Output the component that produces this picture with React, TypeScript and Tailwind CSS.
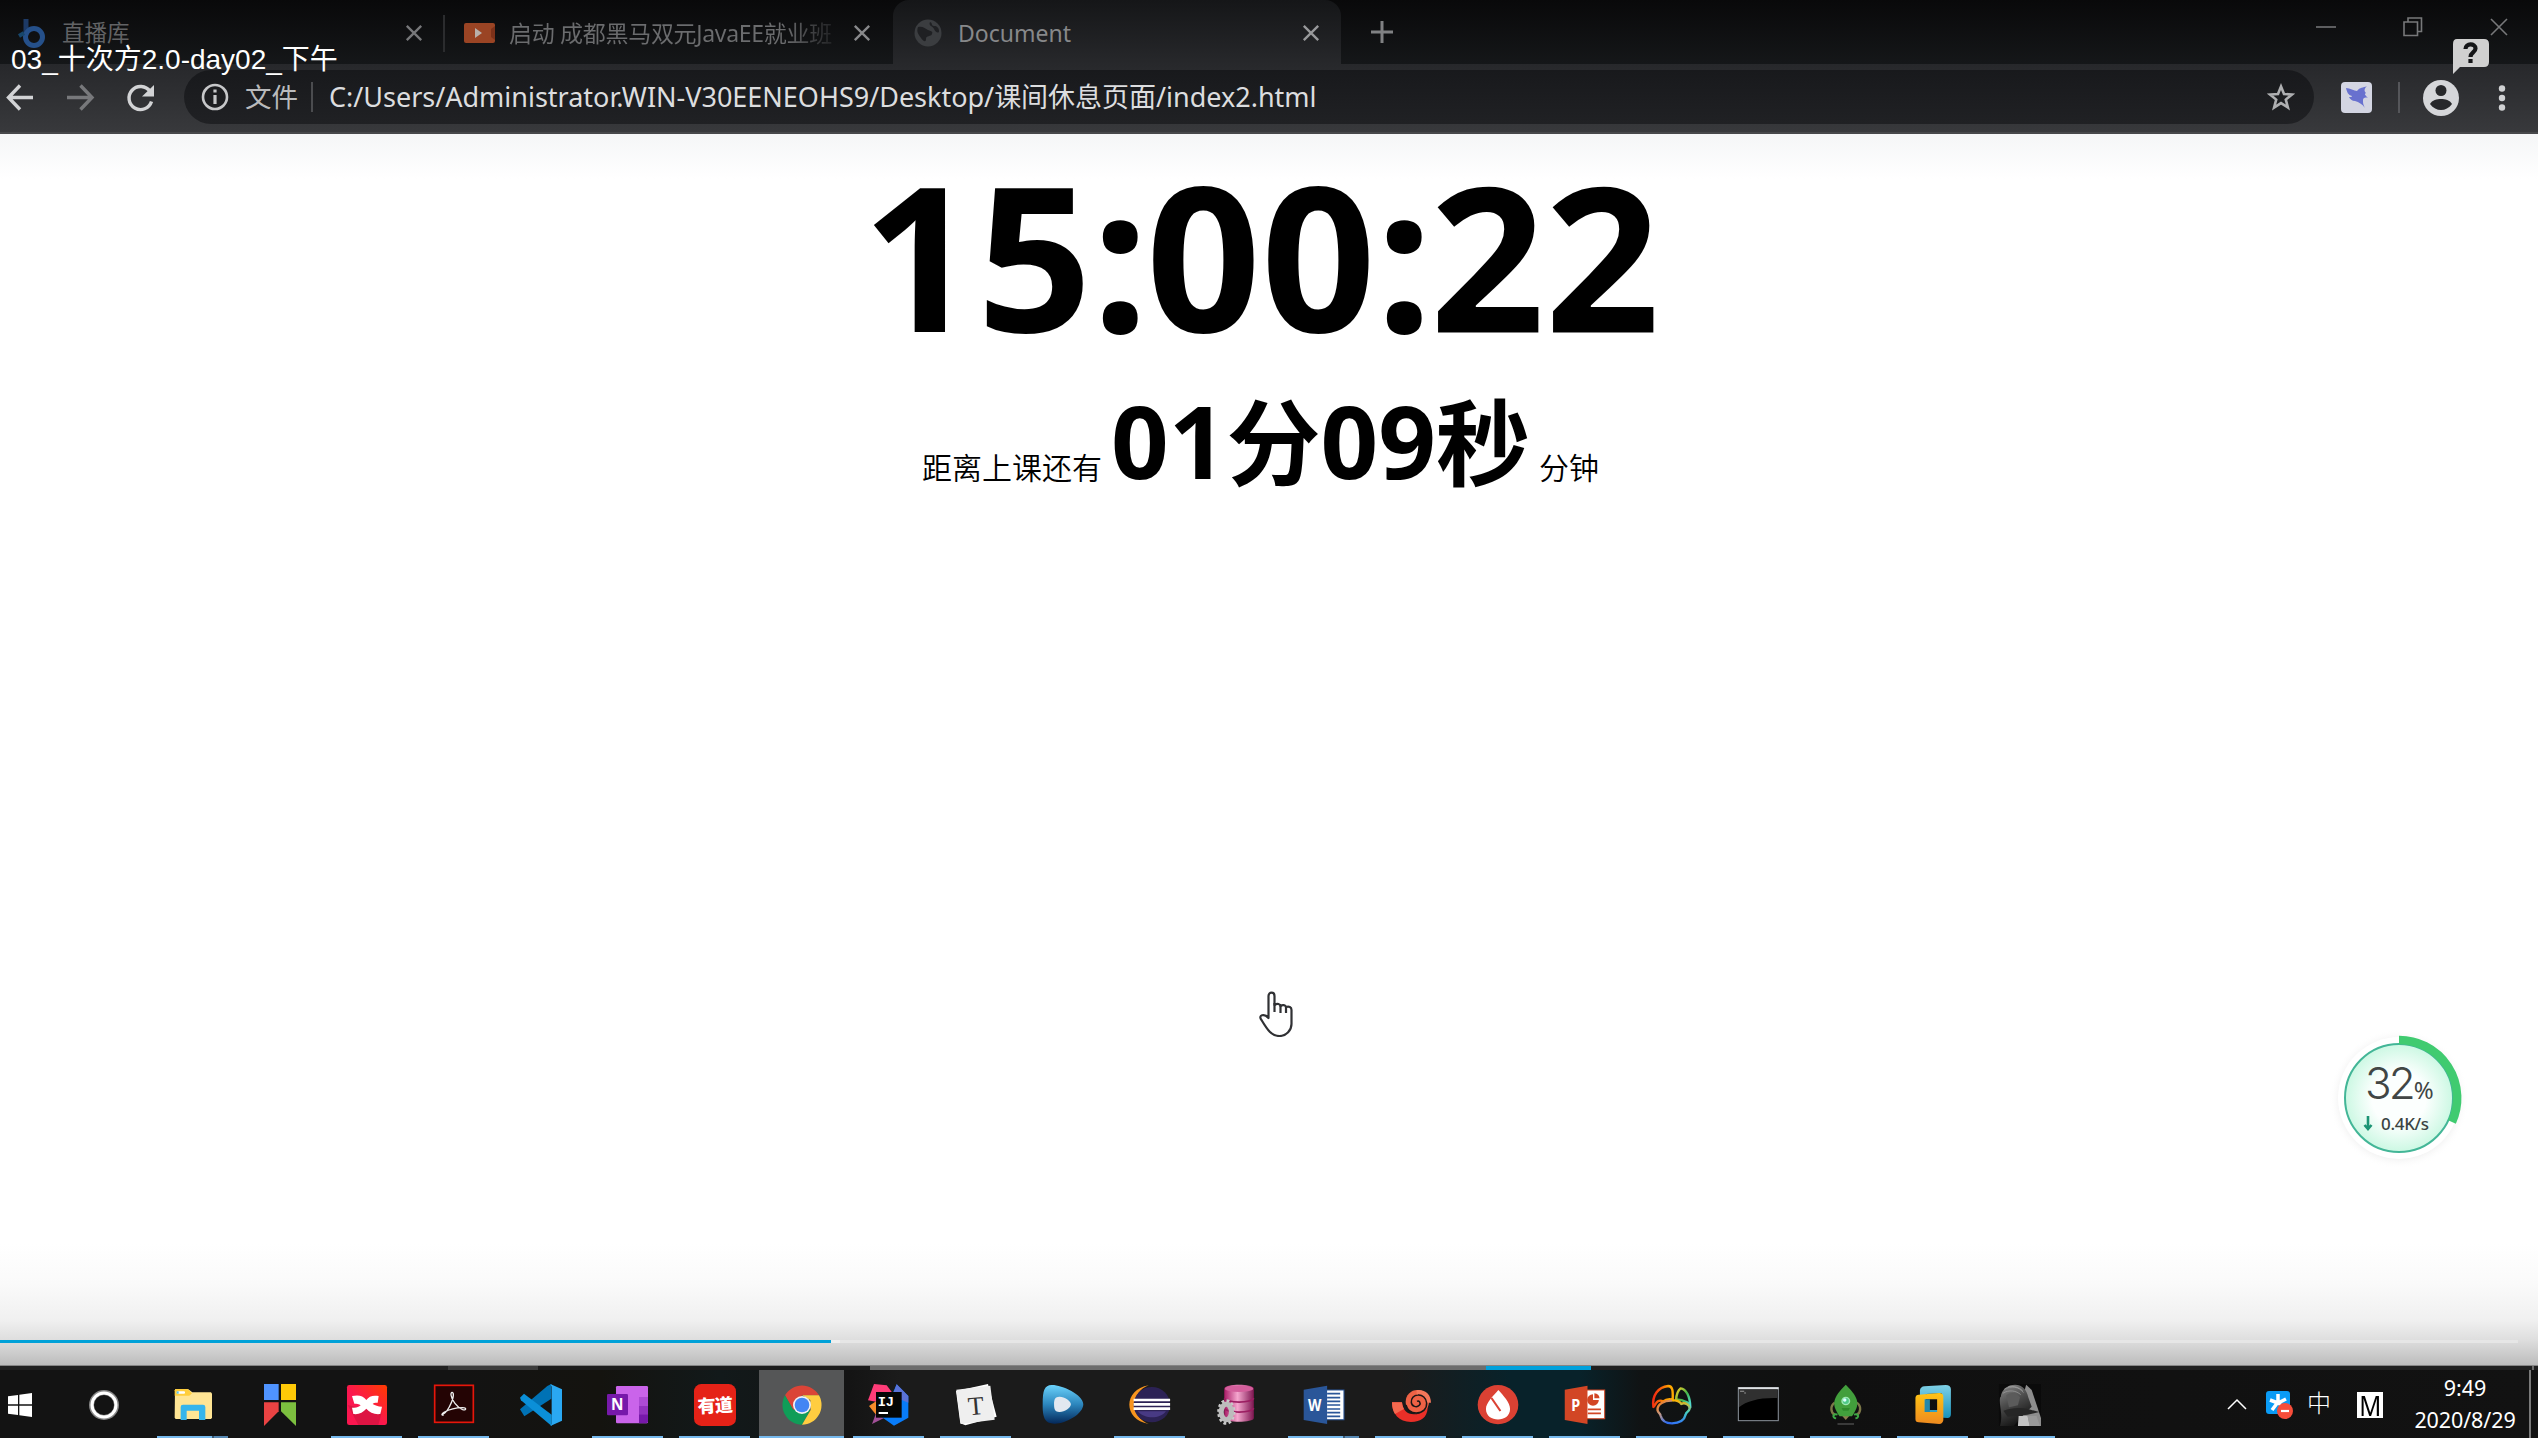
import React from "react";

const UI = "font-['Noto_Sans','Noto_Sans_CJK_SC',sans-serif]";

function Cross({ s, w, c, cls }: { s: number; w: number; c: string; cls?: string }) {
  return (
    <svg width={s} height={s} viewBox="0 0 20 20" className={`shrink-0 ${cls ?? ""}`} stroke={c} strokeWidth={w} fill="none">
      <path d="M2 2 18 18M18 2 2 18" />
    </svg>
  );
}

function TabStrip() {
  return (
    <div className="flex h-16 items-start bg-linear-to-b from-[#09090a] to-[#151719]">
      <div className="flex h-16 w-[443px] items-center pt-px pl-[17px]">
        <svg width="29" height="30" viewBox="0 0 29 30" className="mr-[16px]" fill="none">
          <path d="M9 1v16" stroke="#1d3a66" strokeWidth="5" />
          <circle cx="17" cy="19" r="8.5" stroke="#25508a" strokeWidth="5" />
          <path d="M2 18l5-3" stroke="#17466b" strokeWidth="4" />
        </svg>
        <span className="w-[336px] text-[22.500px] leading-8 text-[#626365]">直播库</span>
        <Cross s={18} w={2.6} c="#77787a" cls="ml-[7px]" />
      </div>
      <div className="mt-[15px] h-[37px] w-[2px] bg-[#2b2c2e]" />
      <div className="flex h-16 w-[448px] items-center pt-px pl-[19px]">
        <svg width="31" height="20" viewBox="0 0 31 20">
          <rect width="31" height="20" rx="2" fill="#9a4424" />
          <path d="M11 5v10l7-5z" fill="#b9b0aa" />
          <path d="M27 6l4-3v14l-4-3z" fill="#7d3119" />
        </svg>
        <div className="ml-[14px] w-[325px] overflow-hidden bg-linear-to-r from-[#6b6c6e] from-85% to-[#202123] bg-clip-text text-[23px] leading-8 tracking-[-0.3px] whitespace-nowrap text-transparent">启动 成都黑马双元JavaEE就业班</div>
        <Cross s={18} w={2.6} c="#88898b" cls="ml-[19px]" />
      </div>
      <div className="flex h-16 w-[448px] items-center rounded-t-[16px] bg-linear-to-b from-[#151618] to-[#27282b] pt-px pl-[21px]">
        <svg width="28" height="28" viewBox="0 0 28 28">
          <circle cx="14" cy="14" r="13.5" fill="#3b3d40" />
          <path d="M4 8c5-1 6 1 10 3s5 1 4 4-6 1-6 5-3 2-5-1-5-6-3-11zM16 3c3 1 1 4 4 4s5 2 5 5-4 1-5-2-6-3-4-7z" fill="#1f2023" />
        </svg>
        <span className="ml-[16px] w-[343px] text-[23px] leading-8 text-[#87888a]">Document</span>
        <Cross s={18} w={2.6} c="#98999b" cls="ml-px" />
      </div>
      <svg width="24" height="24" viewBox="0 0 24 24" className="mt-5 ml-[29px]" stroke="#808183" strokeWidth="3">
        <path d="M12 1v22M1 12h22" />
      </svg>
      <div className="ml-auto flex pt-[17px] pr-[29px]">
        <div className="mt-[9px] mr-[67px] h-[2px] w-[20px] bg-[#5d5e60]" />
        <svg width="20" height="20" viewBox="0 0 20 20" className="mr-[66px]" fill="none" stroke="#77787a" strokeWidth="1.6">
          <path d="M1 5h13.500v13.500H1zM5 5V1h13.500v13.500h-4" />
        </svg>
        <Cross s={20} w={1.6} c="#77787a" />
      </div>
    </div>
  );
}

function Toolbar() {
  return (
    <div className="flex h-[70px] items-start border-b-2 border-[#47484a] bg-linear-to-b from-[#27282b] to-[#38393c]">
      <svg width="160" height="40" viewBox="0 0 160 40" className="mt-[13px] shrink-0" fill="none" strokeWidth="3.4">
        <path d="M33 20.500H9M20 8.500 8.500 20.500 20 32.500" stroke="#d2d3d5" />
        <path d="M67 20.500H91M80.500 8.500 92 20.500 80.500 32.500" stroke="#77787b" />
        <path d="M150 14.500A11.500 11.500 0 1 0 151.500 24.500" stroke="#d2d3d5" />
        <path d="M154 8v11.500h-12z" fill="#d2d3d5" />
      </svg>
      <div className="mt-[6px] ml-[24px] flex h-[54px] w-[2130px] shrink-0 items-center rounded-full bg-linear-to-b from-[#18191c] to-[#202124] pl-[17px]">
        <svg width="28" height="28" viewBox="0 0 28 28" fill="none" stroke="#c6c7c9" strokeWidth="2.600">
          <circle cx="14" cy="14" r="12" />
          <path d="M14 12v9M14 6.500v3" strokeWidth="3.200" />
        </svg>
        <span className="ml-[16px] w-[66px] text-[26.500px] leading-8 text-[#b9babc]">文件</span>
        <div className="h-[30px] w-[2px] bg-[#4b4c4f]" />
        <span className="ml-[16px] text-[27px] leading-8 tracking-[-0.01px] whitespace-nowrap text-[#dcdddf]">C:/Users/Administrator.WIN-V30EENEOHS9/Desktop/课间休息页面/index2.html</span>
        <svg width="28" height="28" viewBox="0 0 28 28" className="mr-[19px] ml-auto" fill="none" stroke="#aeafb1" strokeWidth="2.600">
          <path d="M14 3.500l3 7.500 8 .5-6.200 5.100 2.100 7.900-6.900-4.400-6.900 4.400 2.100-7.900L3 11.500l8-.5z" />
        </svg>
      </div>
      <div className="mt-[18px] ml-[27px] flex h-[31px] items-center">
        <svg width="31" height="31" viewBox="0 0 31 31" className="mr-[26px]">
          <rect width="31" height="31" rx="4" fill="#d3d5e2" />
          <path d="M5 6c4 0 8 3 11 3 3-4 6-3 10-5-3 3-3 5-1 7-2 1-1 2 2 5-3-1-5 0-5 2 0 3 0 4 2 8-3-4-6-6-10-7-3 0-5-2-6-4 2 0 3 0 3-1-4-1-5-4-6-8z" fill="#6871cf" />
        </svg>
        <div className="mr-[23px] h-[31px] w-[2px] bg-[#55565a]" />
        <svg width="36" height="36" viewBox="0 0 36 36" className="mr-[39px]">
          <circle cx="18" cy="18" r="18" fill="#d5d6d9" />
          <circle cx="18" cy="10.500" r="5.500" fill="#27282b" />
          <path d="M7 24c2-4 7-5 11-5s9 1 11 5c-3 4-7 6-11 6s-8-2-11-6z" fill="#27282b" />
        </svg>
        <svg width="8" height="28" viewBox="0 0 8 28" fill="#d0d1d3">
          <circle cx="4" cy="4.500" r="3.200" />
          <circle cx="4" cy="14" r="3.200" />
          <circle cx="4" cy="23.500" r="3.200" />
        </svg>
      </div>
    </div>
  );
}

function Page() {
  return (
    <div className="flex h-[1231px] flex-col items-center bg-[linear-gradient(to_bottom,#f5f6f7_0px,#ffffff_45px,#ffffff_1110px,#fafafa_1150px,#f0f0f0_1186px,#dedede_1206px,#bcbcbc_1231px)] text-black">
      <div className="flex h-[240px] items-center pr-[16px] text-[201px] leading-none font-bold">
        <span>15</span><span className="w-[54px] tracking-[-4px]">:</span><span>00</span><span className="w-[54px] tracking-[-4px]">:</span><span>22</span>
      </div>
      <div className="mt-[16px] flex items-baseline pr-[17px]">
        <span className="text-[30px] leading-none font-[350]">距离上课还有</span>
        <span className="ml-[9px] flex items-baseline text-[101px] leading-none font-bold">
          01<span className="w-[94px] text-[94px]">分</span>09<span className="w-[94px] text-[94px]">秒</span>
        </span>
        <span className="ml-[9px] text-[30px] leading-none font-[350]">分钟</span>
      </div>
    </div>
  );
}

function Ico({ cx, w = 126, children }: { cx: number; w?: number; children: React.ReactNode }) {
  return (
    <svg width="42" height="42" viewBox={`${cx - w / 2} 192 ${w} 126`} preserveAspectRatio="none" className="mt-[14px] overflow-visible">
      {children}
    </svg>
  );
}

type App = { cx: number; w?: number; bar: 0 | 1 | 2 | 3; art: React.ReactNode };

const apps: App[] = [
  { cx: 579, bar: 2, art: <>
    <path d="M525 208h40l12 9h56l3 4v72l-3 4H527l-3-4z" fill="#ffe594" />
    <path d="M527 207h36l13 13-8 7h-44v-16z" fill="#ffce3d" />
    <rect x="530" y="214" width="25" height="7" rx="3" fill="#fff" /><rect x="530" y="214" width="6" height="7" fill="#5cc5e6" />
    <path d="M542 300v-39q0-7 7-7h60q7 0 7 7v39h-19v-28h-37v28z" fill="#35b5ec" />
  </> },
  { cx: 840, bar: 0, art: <>
    <path d="M792 192h44v48h-44z" fill="#4f93ff" /><path d="M843 192h45v48h-45z" fill="#ffc907" />
    <path d="M792 247h44v27l-44 44z" fill="#ea4343" /><path d="M843 247h45v71l-45-44z" fill="#7cbf3f" />
  </> },
  { cx: 1101, bar: 1, art: <>
    <defs><linearGradient id="xm" x1="0" x2="1" y1="1" y2="0"><stop offset=".45" stopColor="#fb164f" /><stop offset="1" stopColor="#ff3b00" /></linearGradient></defs>
    <rect x="1041" y="195" width="120" height="120" rx="7" fill="url(#xm)" />
    <path d="M1145 278l-10 37h-60l-32-60z" fill="#c9143c" opacity=".6" />
    <path d="M1056 228c18-4 33-2 43 12 8-12 20-15 37-12l-3 20c-9 0-14 1-15 4 8 4 15 8 28 8l-5 22c-18 2-32-4-42-16-11 12-22 18-39 16l-4-19c13 1 20-1 26-7-5-4-12-5-19-5z" fill="#fff" />
  </> },
  { cx: 1362, bar: 1, art: <>
    <rect x="1304" y="196" width="116" height="111" fill="#240404" stroke="#e7160a" strokeWidth="5" />
    <path d="M1328 282c12-2 30-36 32-55 1-12-8-13-7-2 2 15 18 38 35 44 12 3 12-6 0-6-20 0-42 6-56 14-7 4-9 10-1 8" fill="none" stroke="#eee" strokeWidth="4" />
  </> },
  { cx: 123, bar: 0, art: <>
    <path d="M60 268l82-70 12-6v44L73 289z" fill="#0072b5" />
    <path d="M60 233l12-12 83 63v34L63 241z" fill="#0b8fd8" />
    <path d="M151 192l35 16v94l-35 16 4-6V200z" fill="#2aa8f2" />
  </> },
  { cx: 384, bar: 1, art: <>
    <rect x="348" y="198" width="96" height="112" rx="4" fill="#ca64ea" />
    <path d="M417 231h27v27h-27z" fill="#ae4bd5" /><path d="M417 258h27v25h-27z" fill="#9332bf" /><path d="M417 283h27v23l-4 4h-23z" fill="#7719aa" />
    <rect x="321" y="222" width="63" height="64" rx="4" fill="#7719aa" />
    <text x="352" y="271" fontSize="46" fontWeight="700" fill="#fff" textAnchor="middle">N</text>
  </> },
  { cx: 645, bar: 1, art: <>
    <rect x="582" y="192" width="126" height="126" rx="22" fill="#e52217" />
    <text x="645" y="276" fontSize="54" fontWeight="900" fill="#fff" textAnchor="middle" letterSpacing="-2" transform="rotate(-3 645 255)">有道</text>
  </> },
  { cx: 906, bar: 3, art: <>
    <path d="M855 226A59 59 0 0 1 957 226H906L880 270z" fill="#db4437" />
    <path d="M855 226A59 59 0 0 0 906 314L931 270 880 270z" fill="#0f9d58" />
    <path d="M957 226A59 59 0 0 1 906 314L932 270 931 240 906 226z" fill="#ffcd40" />
    <circle cx="906" cy="255" r="27" fill="#f1f1f1" /><circle cx="906" cy="255" r="22" fill="#4285f4" />
  </> },
  { cx: 1167, bar: 1, art: <>
    <path d="M1122 192l38 4 18 24-50 25-24-4z" fill="#ff3c78" /><path d="M1107 258l21-14v40z" fill="#f58a2a" />
    <path d="M1128 280l24 14-36 18z" fill="#a25098" />
    <path d="M1190 193l35 35v65l-43 24-36-25 32-72z" fill="#087cfa" /><path d="M1190 193l35 35v20l-48-20z" fill="#5b72d8" />
    <rect x="1128" y="216" width="77" height="77" fill="#050505" />
    <text x="1133" y="259" fontSize="41" fontWeight="700" fill="#fff" fontFamily="Liberation Mono">IJ</text><path d="M1136 276h28v6h-28z" fill="#fff" />
  </> },
  { cx: 1428, bar: 1, art: <>
    <path d="M1368 213l96-21 26 98-94 26-15-6z" fill="#fff" /><path d="M1369 209l102-12 13 102-102 13z" fill="#efefef" />
    <text x="1428" y="284" fontSize="78" fill="#333" textAnchor="middle" fontFamily="Liberation Serif" transform="rotate(-5 1428 260)">T</text>
  </> },
  { cx: 183, w: 122, bar: 0, art: <>
    <defs><linearGradient id="pl" x2="0" y2="1"><stop stopColor="#6bd2fb" /><stop offset=".5" stopColor="#2c86bd" /><stop offset="1" stopColor="#04285a" /></linearGradient></defs>
    <path d="M150 195c28-1 92 28 92 58s-54 60-85 58c-22-1-34-10-33-58 0-43 5-57 26-58z" fill="url(#pl)" />
    <path d="M172 230c14-1 34 12 34 23s-20 24-34 23c-11 0-15-5-15-23 0-17 4-22 15-23z" fill="#e2e8f0" />
  </> },
  { cx: 435.6, w: 122, bar: 1, art: <>
    <path d="M432 196C357 208 357 300 432 312C378 292 378 216 432 196z" fill="#f7941e" />
    <circle cx="441" cy="254" r="53" fill="#2c2255" /><path d="M400 274h82c-18 24-62 24-82 0z" fill="#483a84" />
    <path d="M388 236h106v8H388zM388 249h106v8H388zM388 262h106v8H388z" fill="#fff" />
  </> },
  { cx: 686, w: 122, bar: 0, art: <>
    <defs><linearGradient id="db"><stop stopColor="#a81b66" /><stop offset=".45" stopColor="#f5a6ce" /><stop offset="1" stopColor="#7d1550" /></linearGradient></defs>
    <path d="M649 206c0-16 86-16 86 0v88c0 15-86 15-86 0z" fill="url(#db)" />
    <ellipse cx="692" cy="206" rx="41" ry="10" fill="#d45f9c" /><path d="M649 235c10 15 76 15 86 0M649 265c10 15 76 15 86 0" stroke="#9c1e62" strokeWidth="5" fill="none" />
    <ellipse cx="655" cy="276" rx="22" ry="34" fill="none" stroke="#c9c9c9" strokeWidth="9" strokeDasharray="8 6.800" />
    <ellipse cx="655" cy="276" rx="15" ry="23" fill="none" stroke="#bcbcbc" strokeWidth="15" />
  </> },
  { cx: 941, w: 122, bar: 2, art: <>
    <path d="M945 210h54v89h-54z" fill="#fff" stroke="#2a5699" strokeWidth="3" />
    <path d="M950 221h38M950 233h38M950 244h38M950 255h38M950 267h38M950 278h38M950 289h38" stroke="#2a5699" strokeWidth="5" />
    <path d="M882 209l68-12v115l-68-12z" fill="#2a5699" />
    <text x="914" y="272" fontSize="46" fontWeight="700" fill="#fff" textAnchor="middle" textLength="39" lengthAdjust="spacingAndGlyphs">W</text>
  </> },
  { cx: 1193.6, w: 122, bar: 1, art: <g transform="translate(871.2 30) scale(.968 1)">
    <path d="M276 217h30c2 22 14 36 36 36 24 0 38-12 41-40v22c-2 28-20 41-50 41-36 0-57-24-57-59z" fill="#ea2f28" />
    <path d="M276 217h30c1 9 3 15 6 20l-27 15c-6-9-9-21-9-35z" fill="#f4694f" />
    <circle cx="352" cy="215" r="35" fill="#ee6245" /><path d="M350 180c26-3 43 13 43 38h-13c-3-18-14-26-30-26z" fill="#f4775a" />
    <path d="M318 225c4 16 16 24 31 24 20 0 32-13 31-30-1-15-13-25-26-24-13 0-21 11-20 22 1 12 16 17 24 9 6-8-1-15-7-12" fill="none" stroke="#1a1616" strokeWidth="4.500" />
  </g> },
  { cx: 1446, w: 122, bar: 1, art: <>
    <circle cx="1446" cy="254" r="59" fill="#db4133" />
    <path d="M1447 210c14 16 34 38 34 57 0 42-70 42-70 0 0-19 22-40 36-57z" fill="#fff" />
    <path d="M1427 234l26 39" stroke="#db4133" strokeWidth="6" />
  </> },
  { cx: 188.8, w: 122, bar: 1, art: <>
    <path d="M192 210h54v86h-54z" fill="#fff" stroke="#d24625" strokeWidth="3" />
    <path d="M212 223a17 17 0 1 0 17 17h-17z" fill="#d24625" /><path d="M216 220a16 16 0 0 1 15 15h-15z" fill="#d24625" />
    <path d="M197 268h38M197 280h38" stroke="#d24625" strokeWidth="5" />
    <path d="M130 209l66-12v115l-66-12z" fill="#d24625" />
    <text x="162" y="272" fontSize="50" fontWeight="700" fill="#fff" textAnchor="middle" textLength="26" lengthAdjust="spacingAndGlyphs">P</text>
  </> },
  { cx: 441, w: 122, bar: 1, art: <>
    <defs><linearGradient id="nv" x2="1" y2=".2"><stop stopColor="#f01414" /><stop offset=".8" stopColor="#ffa800" /></linearGradient>
      <linearGradient id="nw" x2="1" y2="1"><stop stopColor="#ffd021" /><stop offset=".5" stopColor="#43b649" /><stop offset="1" stopColor="#50e0e8" /></linearGradient>
      <linearGradient id="nx" x2=".6" y2="1"><stop stopColor="#ff7300" /><stop offset=".5" stopColor="#c59a86" /><stop offset="1" stopColor="#2f6df0" /></linearGradient>
      <linearGradient id="ny" x2="0" y2="1"><stop stopColor="#ffb000" /><stop offset=".5" stopColor="#46d2c0" /><stop offset="1" stopColor="#3278f5" /></linearGradient></defs>
    <g fill="none" strokeWidth="7" strokeLinejoin="round">
      <path d="M387 261c-5-35 14-60 43-63 13 0 14 14 13 41-12-3-20-1-29 6-4-5-11-3-14-1-6 4-8 12-13 17z" stroke="url(#nv)" />
      <path d="M453 239c1-15 4-27 13-34 16 1 28 26 28 57-3-9-8-15-14-17-10-6-16-7-27-6z" stroke="url(#nw)" />
      <path d="M441 242c-22-1-44 10-42 29 2 9 8 9 9 16 4 16 16 23 33 23" stroke="url(#nx)" />
      <path d="M441 242c12-3 24 3 27 10 10-6 26 3 24 14-2 10-10 9-11 17-4 18-17 27-40 27" stroke="url(#ny)" />
    </g>
  </> },
  { cx: 694, w: 122, bar: 1, art: <>
    <rect x="634" y="203" width="116" height="99" fill="#000" stroke="#8b929b" strokeWidth="3" />
    <path d="M636 209h112v25c-48-2-90 8-112 28z" fill="#303030" /><path d="M634 202h117v6H634z" fill="#dfe2e5" />
    <path d="M639 214h12M651 219h5" stroke="#999" strokeWidth="3" />
  </> },
  { cx: 946.7, w: 122, bar: 1, art: <>
    <path d="M914 248c-14 10-12 30 0 36M978 248c14 10 12 30 0 36" fill="none" stroke="#7c7848" strokeWidth="7" />
    <path d="M922 284c-14-5-16 10-4 11M970 284c14-5 16 10 4 11" fill="none" stroke="#3da844" strokeWidth="6" />
    <path d="M934 286h24l-12 14z" fill="#8a7e4c" />
    <path d="M946 194c40 42 42 58 18 95h-36c-24-37-22-53 18-95z" fill="#429f3c" />
    <circle cx="946" cy="243" r="13" fill="#9fe8b4" /><circle cx="946" cy="243" r="9" fill="#4fc987" /><circle cx="943" cy="240" r="5" fill="#dff" />
    <path d="M934 264h24l-4 8h-16z" fill="#2f8a2c" /><path d="M922 309h48v6h-48z" fill="#3a3a3a" />
  </> },
  { cx: 1199, w: 122, bar: 1, art: <>
    <defs><linearGradient id="vb" x2="0" y2="1"><stop stopColor="#7fd0e6" /><stop offset="1" stopColor="#1793bd" /></linearGradient>
      <linearGradient id="vo" x2="0" y2="1"><stop stopColor="#ffc414" /><stop offset="1" stopColor="#ee8a1f" /></linearGradient></defs>
    <path d="M1174 199l62-4q14 0 15 12v76q0 11-10 11l-74-5q-6 0-6-8v-70q2-11 13-12zM1178 222v48h46v-50z" fill="url(#vb)" fillRule="evenodd" />
    <path d="M1157 224l60-5q12 0 12 11v71q-2 11-12 11l-60-5q-9 0-9-10v-64q1-9 9-9zM1175 238v38h36v-38z" fill="url(#vo)" fillRule="evenodd" />
    <path d="M1175 238h15v38h-15z" fill="#2488aa" />
  </> },
  { cx: 1452, w: 122, bar: 1, art: <>
    <defs><linearGradient id="ph" x2=".4" y2="1"><stop stopColor="#8a8a8a" /><stop offset=".5" stopColor="#4a4a4a" /><stop offset="1" stopColor="#161616" /></linearGradient></defs>
    <path d="M1391 192h122v126h-122z" fill="#0b0b0b" />
    <path d="M1470 194l16 16 27 84v24h-62l-4-40z" fill="#8d8d8d" />
    <path d="M1396 232c2-24 20-38 42-38 22 1 34 16 38 38l10 28-22 22-30 36h-40c10-34-4-62 0-86z" fill="url(#ph)" />
    <path d="M1412 226c14-12 32-8 40 6l-6 24-26 6z" fill="#5b5b5b" />
    <path d="M1406 208c20-12 44-8 56 10M1402 220c18-12 40-8 52 4M1418 200c14-3 32 2 42 12" stroke="#a5a5a5" strokeWidth="2.500" fill="none" opacity=".75" />
    <path d="M1404 272c26-10 50-10 74-4l30 8-34 8-58 6z" fill="#262626" />
    <path d="M1448 288h26l6 30h-34z" fill="#c4c4c4" /><path d="M1474 288h26l10 30h-30z" fill="#999" />
  </> },
];

function Bar({ kind }: { kind: 0 | 1 | 2 | 3 }) {
  if (kind === 0) return <div className="h-[2px]" />;
  if (kind === 3) return <div className="h-[2px] w-[85px] bg-[#76b9ed]" />;
  if (kind === 2) return <div className="flex h-[2px] w-[71px]"><div className="flex-1 bg-[#76b9ed]" /><div className="w-[2px] bg-[#3b5a75]" /><div className="w-[14px] bg-[#5688b3]" /></div>;
  return <div className="h-[2px] w-[71px] bg-[#76b9ed]" />;
}

function Taskbar() {
  return (
    <div className="flex h-[68px] bg-[linear-gradient(to_right,#131313_0px,#131313_450px,#14130f_600px,#12191a_720px,#141414_850px,#1b1b1b_900px,#1b1b1b_1400px,#08222a_1510px,#08222a_1580px,#101314_1640px,#101010_1800px,#121212_2538px)]">
      <div className="flex w-[149px] shrink-0 pl-[8px]">
        <svg width="24" height="24" viewBox="0 0 72 72" className="mt-[23px]" fill="#fff">
          <path d="M0 10l30-4v28H0zM34 5l38-5v34H34zM0 38h30v28L0 62zM34 38h38v34l-38-5z" />
        </svg>
        <svg width="30" height="30" viewBox="0 0 30 30" className="mt-5 ml-[57px]" fill="none">
          <circle cx="15" cy="15" r="12.500" stroke="#888" strokeWidth="5" /><circle cx="15" cy="15" r="12" stroke="#fff" strokeWidth="3" />
        </svg>
      </div>
      {apps.map((a) => (
        <div key={a.cx} className="flex w-[87px] shrink-0 justify-center">
          <div className={a.bar === 3 ? "flex w-[85px] flex-col items-center justify-between bg-[#555657]" : "flex w-[85px] flex-col items-center justify-between"}>
            <Ico cx={a.cx} w={a.w}>{a.art}</Ico>
            <Bar kind={a.bar} />
          </div>
        </div>
      ))}
      <div className="ml-auto flex shrink-0 items-start text-white">
        <svg width="20" height="12" viewBox="0 0 20 12" className="mt-7 mr-[19px]" fill="none" stroke="#fff" strokeWidth="1.500"><path d="M1 11 10 2l9 9" /></svg>
        <svg width="28" height="28" viewBox="0 0 28 28" className="mt-[21px] mr-[13px]">
          <rect width="24" height="23" rx="3" fill="#0a9bf5" />
          <path d="M12 3v8M4 9l8 3 8-4M12 11l-6 8M12 11l5 6" stroke="#fff" strokeWidth="3.500" fill="none" />
          <circle cx="19" cy="20" r="8" fill="#f74d3a" /><path d="M15 20h8" stroke="#fff" strokeWidth="2.200" />
        </svg>
        <span className="mt-[19px] w-[24px] text-[24px] leading-[28px] font-light">中</span>
        <div className="mt-[22px] ml-[26px] flex h-[26px] w-[26px] items-center justify-center bg-white text-[27px] leading-none text-black">
          <span className="scale-x-90">M</span>
        </div>
        <div className="ml-[31px] flex w-[102px] flex-col items-center pt-[2px] text-[21.500px] leading-[32px] tracking-[-0.1px]">
          <span>9:49</span><span>2020/8/29</span>
        </div>
        <div className="ml-[13px] h-[68px] w-[2px] bg-[#7a7a7a]" />
        <div className="w-[7px]" />
      </div>
    </div>
  );
}

function SpeedBall() {
  return (
    <div className="absolute top-[1028px] left-[2329px] h-[140px] w-[140px]">
      <svg width="140" height="140" viewBox="0 0 140 140">
        <defs>
          <radialGradient id="ball"><stop offset=".5" stopColor="#fcfffe" /><stop offset="1" stopColor="#ccf8e3" /></radialGradient>
          <radialGradient id="halo"><stop offset=".82" stopColor="#efefef" /><stop offset="1" stopColor="#fff" stopOpacity="0" /></radialGradient>
        </defs>
        <circle cx="70" cy="71" r="70" fill="url(#halo)" />
        <circle cx="70" cy="70" r="61" fill="#fff" />
        <circle cx="70" cy="70" r="54" fill="url(#ball)" stroke="#43b697" strokeWidth="2" />
        <path d="M70 12A58 58 0 0 1 123 94" fill="none" stroke="#40cb70" strokeWidth="8.500" />
        <path d="M39 88v13M35.500 97l3.500 4 3.500-4" fill="none" stroke="#1c9474" strokeWidth="2.600" />
      </svg>
      <div className="absolute top-[29px] left-[36px] flex items-baseline text-[#414645]">
        <span className="font-['Inter',sans-serif] text-[44px] leading-[52px] font-light tracking-[-3px]">32</span>
        <span className="ml-[1px] text-[24px]">%</span>
      </div>
      <span className="absolute top-[86px] left-[52px] text-[17px] leading-5 font-medium tracking-[-0.3px] text-[#3b4442]">0.4K/s</span>
    </div>
  );
}

export default function App() {
  return (
    <div className={`relative h-[1438px] w-[2538px] overflow-hidden bg-white ${UI}`}>
      <TabStrip />
      <Toolbar />
      <Page />
      <div className="flex h-[5px] border-t border-[#858585]">
        <div className="w-[448px] bg-[#202020]" /><div className="w-[90px] bg-[#3d3d3d]" /><div className="w-[332px] bg-[#1d1d1d]" />
        <div className="w-[616px] bg-[#6d6d6d]" /><div className="w-[105px] bg-[#00a1dc]" /><div className="flex-1 bg-[#1f1f1f]" />
        <div className="w-[2px] bg-[#6a6a6a]" /><div className="w-[4px] bg-[#1f1f1f]" />
      </div>
      <Taskbar />

      <div className="absolute top-[1340px] left-0 flex h-[3px] w-[2518px] bg-[#e6e6e6]">
        <div className="w-[831px] bg-[#00a1d8]" /><div className="w-[9px] bg-[#efefef]" />
      </div>
      <div className="absolute top-[40px] left-[11px] font-['Liberation_Sans','Noto_Sans_CJK_SC',sans-serif] text-[28px] leading-[40px] whitespace-nowrap text-white">03_十次方2.0-day02_下午</div>
      <svg width="36" height="36" viewBox="0 0 36 36" className="absolute top-[38px] left-[2453px]">
        <path d="M4 1h27q5 0 5 5v18q0 5-5 5H7l-7 7V6q0-5 4-5z" fill="#d0d0d0" />
        <path d="M12.500 11c0-6 10-6 10-.5 0 4-5 4-5 8.500M17.500 21v4" fill="none" stroke="#151618" strokeWidth="4.200" />
      </svg>
      <svg width="36" height="46" viewBox="0 0 36 46" className="absolute top-[991px] left-[1258px]" fill="#fff" stroke="#303134" strokeWidth="2.200" strokeLinejoin="round">
        <path d="M10.500 27V5c0-4.500 6-4.500 6 0v9c3-2 5.500-1 6 1 2-1.500 5-1 5.500 1 3-1 5.500 0 5.500 3v14c0 6-5 12-12 12-8 0-12-6-18-16-4-5 3-7 7-2z" />
        <path d="M16.500 12v9M22.500 15v7M28 16v6" />
      </svg>
      <SpeedBall />
    </div>
  );
}
